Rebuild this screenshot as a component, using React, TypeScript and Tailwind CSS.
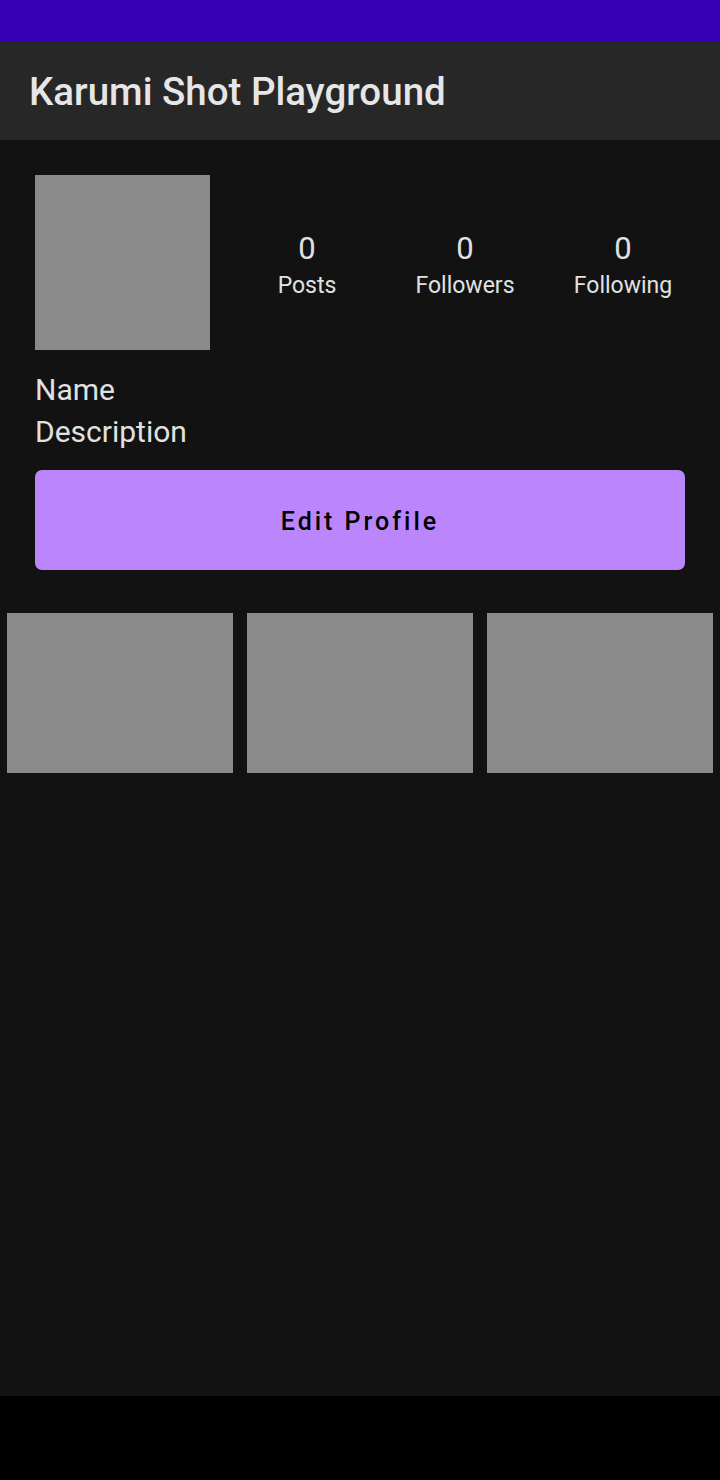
import React from "react";

const stats = [
    {value: "0", label: "Posts"},
    {value: "0", label: "Followers"},
    {value: "0", label: "Following"},
];

export default function App() {
    return (
        <div className="flex h-[1480px] w-[720px] flex-col bg-[#121212] font-['Roboto',sans-serif] text-[#e1e1e1]">
            {/* status bar */}
            <div className="h-[42px] bg-[#3700b3]"/>

            {/* app bar */}
            <header className="flex h-[98px] items-center bg-[#272727] px-[29px] pt-[2px]">
                <h1 className="text-[38.5px] font-medium leading-none text-[#e6e6e6]">Karumi Shot Playground</h1>
            </header>

            <main className="flex-1">
                <div className="px-[35px] pt-[35px]">
                    <div className="flex items-start">
                        <div className="h-[175px] w-[175px] shrink-0 bg-[#8a8a8a]"/>
                        <div className="ml-[18px] -mr-[17px] mt-[56px] grid flex-1 grid-cols-3">
                            {stats.map((s) => (
                                <div key={s.label} className="flex flex-col items-center">
                                    <span className="text-[31px] leading-[36px]">{s.value}</span>
                                    <span className="mt-[4px] text-[23px] leading-[30px]">{s.label}</span>
                                </div>
                            ))}
                        </div>
                    </div>

                    <div className="mt-[19px] text-[30px] leading-[42px]">
                        <p>Name</p>
                        <p>Description</p>
                    </div>

                    <button className="mt-[17px] flex h-[100px] w-full items-center justify-center rounded-[7px] bg-[#bb86fc] pt-[3px] text-[25px] font-medium tracking-[0.12em] text-black">
                        Edit Profile
                    </button>
                </div>

                <div className="mt-[43px] grid grid-cols-3 gap-[14px] px-[7px]">
                    <div className="h-[160px] bg-[#8a8a8a]"/>
                    <div className="h-[160px] bg-[#8a8a8a]"/>
                    <div className="h-[160px] bg-[#8a8a8a]"/>
                </div>
            </main>

            {/* navigation bar */}
            <div className="h-[84px] bg-black"/>
        </div>
    );
}
